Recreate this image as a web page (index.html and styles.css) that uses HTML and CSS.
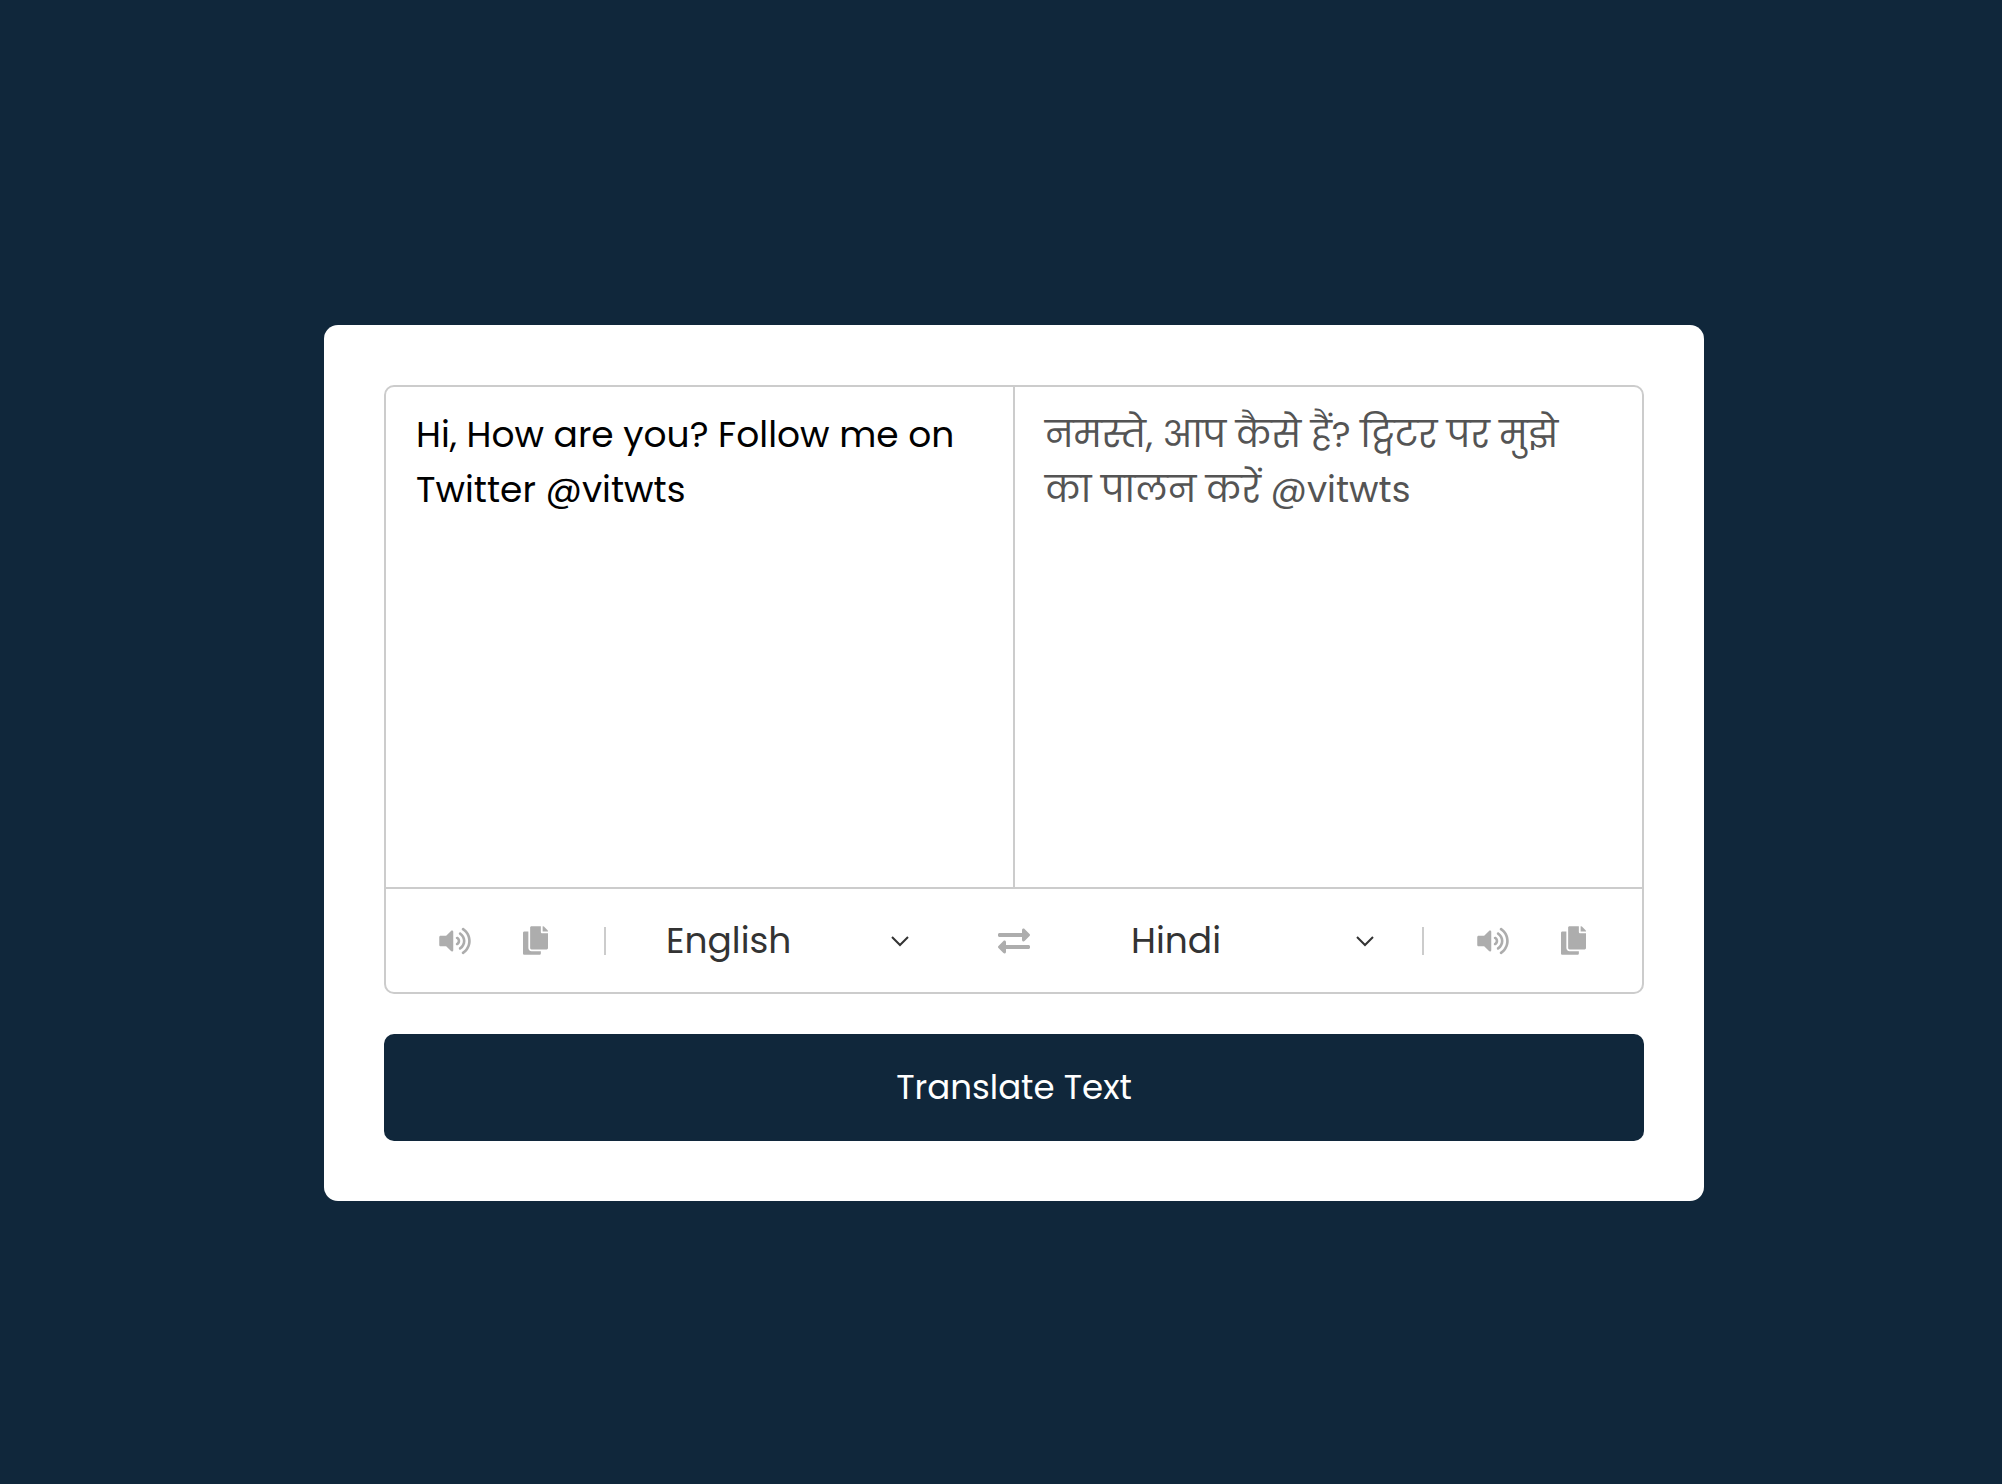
FILE: index.html
```html
<!DOCTYPE html>
<html lang="en">
<head>
<meta charset="utf-8">
<meta name="viewport" content="width=device-width, initial-scale=1">
<title>Language Translator</title>
<link rel="stylesheet" href="styles.css">
</head>
<body>
<svg class="sprite" aria-hidden="true">
  <symbol id="volume" viewBox="0 0 576 512"><path d="M215.03 71.05L126.06 160H24c-13.26 0-24 10.74-24 24v144c0 13.25 10.74 24 24 24h102.06l88.97 88.95c15.03 15.03 40.97 4.47 40.97-16.97V88.02c0-21.46-25.96-31.98-40.97-16.97zm233.32-51.08c-11.17-7.33-26.18-4.24-33.51 6.95-7.34 11.17-4.22 26.18 6.95 33.51 66.27 43.49 105.82 116.6 105.82 195.58 0 78.98-39.55 152.09-105.82 195.58-11.17 7.32-14.29 22.34-6.95 33.5 7.04 10.71 21.93 14.56 33.51 6.95C528.27 439.58 576 351.33 576 256S528.27 72.43 448.35 19.97zM480 256c0-63.53-32.06-121.94-85.77-156.24-11.19-7.14-26.03-3.82-33.12 7.46s-3.78 26.21 7.41 33.36C408.27 165.97 432 209.11 432 256s-23.73 90.02-63.48 115.42c-11.19 7.14-14.5 22.07-7.41 33.36 6.51 10.36 21.12 15.14 33.12 7.46C447.94 377.94 480 319.54 480 256zm-141.77-76.87c-11.58-6.33-26.19-2.16-32.61 9.45-6.39 11.61-2.16 26.2 9.45 32.61C327.98 228.28 336 241.63 336 256c0 14.38-8.02 27.72-20.92 34.81-11.61 6.41-15.84 21-9.45 32.61 6.43 11.66 21.05 15.8 32.61 9.45 28.23-15.55 45.77-45 45.77-76.88s-17.54-61.32-45.78-76.86z"/></symbol>
  <symbol id="copy" viewBox="0 0 448 512"><path d="M320 448v40c0 13.255-10.745 24-24 24H24c-13.255 0-24-10.745-24-24V120c0-13.255 10.745-24 24-24h72v296c0 30.879 25.121 56 56 56h168zm0-344V0H152c-13.255 0-24 10.745-24 24v368c0 13.255 10.745 24 24 24h272c13.255 0 24-10.745 24-24V128H344c-13.2 0-24-10.8-24-24zm120.971-31.029L375.029 7.029A24 24 0 0 0 358.059 0H352v96h96v-6.059a24 24 0 0 0-7.029-16.97z"/></symbol>
  <symbol id="exchange" viewBox="0 0 512 512"><path d="M0 168v-16c0-13.255 10.745-24 24-24h360V80c0-21.367 25.899-32.042 40.971-16.971l80 80c9.372 9.373 9.372 24.569 0 33.941l-80 80C409.956 271.982 384 261.456 384 240v-48H24c-13.255 0-24-10.745-24-24zm488 152H128v-48c0-21.314-25.862-32.08-40.971-16.971l-80 80c-9.372 9.373-9.372 24.569 0 33.941l80 80C102.057 463.997 128 453.437 128 432v-48h360c13.255 0 24-10.745 24-24v-16c0-13.255-10.745-24-24-24z"/></symbol>
  <symbol id="chevron" viewBox="0 0 20 12"><path d="M2 2l8 8 8-8" fill="none" stroke="#333" stroke-width="2"/></symbol>
</svg>
<main class="container">
  <div class="wrapper">
    <div class="text-input">
      <textarea class="from-text" aria-label="Text to translate" spellcheck="false">Hi, How are you? Follow me on Twitter @vitwts</textarea>
      <textarea class="to-text" aria-label="Translation" lang="hi" spellcheck="false" readonly>नमस्ते, आप कैसे हैं? ट्विटर पर मुझे का पालन करें @vitwts</textarea>
    </div>
    <div class="controls">
      <div class="icons icons-from">
        <button class="icon-button" type="button" aria-label="Listen to source"><svg class="icon-volume"><use href="#volume"/></svg></button>
        <button class="icon-button" type="button" aria-label="Copy source"><svg class="icon-copy"><use href="#copy"/></svg></button>
      </div>
      <div class="language language-from">
        <select aria-label="Source language"><option selected>English</option><option>Hindi</option></select>
        <svg class="chevron" aria-hidden="true"><use href="#chevron"/></svg>
      </div>
      <button class="exchange" type="button" aria-label="Swap languages"><svg class="icon-exchange"><use href="#exchange"/></svg></button>
      <div class="language language-to">
        <select aria-label="Target language"><option>English</option><option selected>Hindi</option></select>
        <svg class="chevron" aria-hidden="true"><use href="#chevron"/></svg>
      </div>
      <div class="icons icons-to">
        <button class="icon-button" type="button" aria-label="Listen to translation"><svg class="icon-volume"><use href="#volume"/></svg></button>
        <button class="icon-button" type="button" aria-label="Copy translation"><svg class="icon-copy"><use href="#copy"/></svg></button>
      </div>
    </div>
  </div>
  <button class="translate" type="button">Translate Text</button>
</main>
</body>
</html>
```
FILE: styles.css
```css
* {
  box-sizing: border-box;
  margin: 0;
  padding: 0;
  font-family: Poppins, Inter, "Noto Sans Devanagari", "Noto Sans", sans-serif;
}

body {
  display: flex;
  align-items: center;
  justify-content: center;
  min-height: 100vh;
  padding: 42px 0 0 26px;
  background: #10273b;
}

.sprite {
  position: absolute;
  width: 0;
  height: 0;
}

.container {
  width: 100%;
  max-width: 1380px;
  padding: 60px;
  border-radius: 14px;
  background: #fff;
}

.wrapper {
  border: 2px solid #ccc;
  border-radius: 10px;
}

.text-input {
  display: flex;
  border-bottom: 2px solid #ccc;
}

textarea {
  display: block;
  flex: 1;
  min-width: 0;
  height: 500px;
  padding: 20px 30px;
  border: 0;
  outline: 0;
  resize: none;
  background: none;
  color: #000;
  font-size: 36px;
  line-height: 55px;
}

.to-text {
  border-left: 2px solid #ccc;
  color: #545454;
}

.controls {
  display: grid;
  grid-template-columns: auto 1fr auto 1fr auto;
  align-items: center;
  padding: 24px 0;
}

.icons {
  display: flex;
  height: 28px;
  padding: 0 29px;
  align-items: center;
}

.icons-from {
  border-right: 2px solid #ccc;
}

.icons-to {
  border-left: 2px solid #ccc;
}

button {
  border: 0;
  background: none;
  cursor: pointer;
}

.icon-button,
.exchange {
  display: flex;
  align-items: center;
  justify-content: center;
  color: #adadad;
}

.icon-button {
  width: 80px;
  height: 55px;
}

svg {
  display: block;
  fill: currentColor;
}

.icon-volume {
  width: 32px;
  height: 28px;
}

.icon-copy {
  width: 25px;
  height: 29px;
}

.icon-exchange {
  width: 32px;
  height: 32px;
}

.language {
  display: grid;
  align-items: center;
}

.language-from {
  padding: 0 88px 0 60px;
}

.language-to {
  padding: 0 47px 0 101px;
}

select {
  grid-area: 1 / 1;
  width: 100%;
  height: 55px;
  border: 0;
  outline: 0;
  appearance: none;
  background: none;
  color: #333;
  font-size: 36px;
}

.chevron {
  grid-area: 1 / 1;
  justify-self: end;
  width: 20px;
  height: 12px;
  pointer-events: none;
}

.translate {
  width: 100%;
  margin-top: 40px;
  padding: 26px;
  border-radius: 10px;
  background: #10273b;
  color: #fff;
  font-size: 34px;
  line-height: 55px;
}
```
